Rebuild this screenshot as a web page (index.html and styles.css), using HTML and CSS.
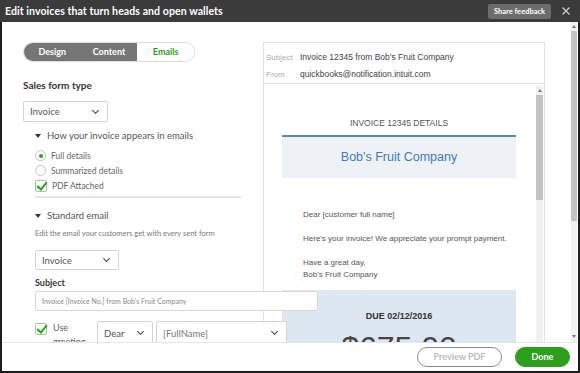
FILE: index.html
```html
<!DOCTYPE html>
<html lang="en">
<head>
    <meta charset="UTF-8">
    <title>Edit invoices</title>
    <link rel="stylesheet" href="styles.css">
</head>
<body>
    <div class="window">
        <header class="topbar">
            <h1 class="title">Edit invoices that turn heads and open wallets</h1>
            <span class="feedback">Share feedback</span>
            <svg class="close" width="8" height="8" viewBox="0 0 8 8">
                <path d="M0.5 0.5 L7.5 7.5 M7.5 0.5 L0.5 7.5" stroke="#d0d0d0" stroke-width="1.2" fill="none"/>
            </svg>
        </header>

        <div class="frame">
            <div class="main">
                <div class="content">
                    <div class="settings">
                        <div class="tabs">
                            <span class="tab dark">Design</span>
                            <span class="tab dark">Content</span>
                            <span class="tab active">Emails</span>
                        </div>

                        <div class="label form-type">Sales form type</div>
                        <div class="select sales-select">Invoice <span class="chev"></span></div>

                        <div class="section">
                            <div class="toggle appears"><span class="caret"></span>How your invoice appears in emails</div>
                            <div class="options">
                                <div class="option"><span class="radio checked"></span>Full details</div>
                                <div class="option"><span class="radio"></span>Summarized details</div>
                                <div class="option"><span class="check"></span>PDF Attached</div>
                            </div>
                            <div class="divider"></div>

                            <div class="toggle standard"><span class="caret"></span>Standard email</div>
                            <div class="hint">Edit the email your customers get with every sent form</div>
                            <div class="select email-select">Invoice <span class="chev"></span></div>

                            <div class="label subject-label">Subject</div>
                            <div class="input">Invoice [Invoice No.] from Bob's Fruit Company</div>

                            <div class="greeting">
                                <span class="check"></span>
                                <span class="greeting-txt">Use<br>greeting</span>
                                <div class="select dear">Dear <span class="chev"></span></div>
                                <div class="select fullname">[FullName] <span class="chev"></span></div>
                            </div>
                        </div>
                    </div>

                    <div class="preview">
                        <div class="mail-head">
                            <div class="head-row"><span class="head-key">Subject</span>Invoice 12345 from Bob's Fruit Company</div>
                            <div class="head-row"><span class="head-key">From</span>quickbooks@notification.intuit.com</div>
                        </div>
                        <div class="mail-body">
                            <div class="mail">
                                <div class="mail-title">INVOICE 12345 DETAILS</div>
                                <div class="company">Bob's Fruit Company</div>
                                <div class="letter">
                                    <p>Dear [customer full name]</p>
                                    <p>Here's your invoice! We appreciate your prompt payment.</p>
                                    <p>Have a great day,<br>Bob's Fruit Company</p>
                                </div>
                                <div class="due">
                                    <div class="due-date">DUE 02/12/2016</div>
                                    <div class="amount">$675.00</div>
                                </div>
                            </div>
                            <div class="scroll inner">
                                <span class="arrow up"></span>
                                <div class="thumb"></div>
                            </div>
                        </div>
                    </div>
                </div>

                <div class="scroll outer">
                    <span class="arrow up"></span>
                    <div class="thumb"></div>
                    <div class="track"></div>
                    <span class="arrow down"></span>
                </div>
            </div>

            <footer class="actions">
                <span class="btn outline">Preview PDF</span>
                <span class="btn done">Done</span>
            </footer>
        </div>
    </div>
</body>
</html>
```

FILE: styles.css
```css
* {
    box-sizing: border-box;
}

body {
    margin: 0;
    font-family: Lato, "Open Sans", sans-serif;
    color: #444;
}

.window {
    width: 580px;
    height: 373px;
    background-color: #fff;
    overflow: hidden;
}

/* top bar */
.topbar {
    display: flex;
    align-items: center;
    height: 22px;
    background-color: #3b3b3b;
    padding: 0 10px 0 5px;
}

.title {
    flex: 1;
    margin: 0;
    font-size: 10.6px;
    font-weight: bold;
    color: #fff;
    letter-spacing: 0.05px;
}

.feedback {
    display: block;
    width: 63px;
    height: 15px;
    line-height: 15px;
    text-align: center;
    background-color: #6c6c6c;
    border-radius: 2px;
    color: #fff;
    font-size: 7.5px;
    font-weight: bold;
    margin-right: 11px;
}

.close {
    display: block;
}

.frame {
    height: 351px;
    border: 2px solid #1d1d1d;
    border-top: none;
}

.main {
    display: flex;
    height: 320px;
    overflow: hidden;
}

.content {
    flex: 1;
    display: flex;
    align-items: flex-start;
    padding: 20px 0 0 21px;
}

/* left settings column */
.settings {
    position: relative;
    z-index: 1;
    width: 240px;
    flex: none;
}

.tabs {
    display: flex;
    width: 172px;
    height: 20px;
    border: 1px solid #ddd;
    border-radius: 10px;
    overflow: hidden;
}

.tab {
    flex: 1;
    line-height: 18px;
    text-align: center;
    font-size: 9px;
    font-weight: bold;
}

.tab.dark {
    background-color: #767676;
    color: #fff;
}

.tab.active {
    color: #2ca01c;
    background-color: #fff;
}

.label {
    font-size: 10px;
    font-weight: bold;
    color: #333;
    line-height: 14px;
}

.form-type {
    margin-top: 16px;
}

.select {
    display: flex;
    align-items: center;
    flex: none;
    height: 21px;
    border: 1px solid #d4d4d4;
    border-radius: 2px;
    padding: 0 6px;
    font-size: 9.5px;
    color: #555;
    background-color: #fff;
}

.chev {
    margin-left: auto;
    width: 5px;
    height: 5px;
    border-right: 1.5px solid #444;
    border-bottom: 1.5px solid #444;
    transform: rotate(45deg);
    margin-top: -3px;
    margin-right: 3px;
}

.sales-select {
    width: 85px;
    margin-top: 9px;
}

.section {
    padding-left: 12px;
}

.toggle {
    display: flex;
    align-items: center;
    font-size: 9.5px;
    color: #555;
    line-height: 14px;
}

.caret {
    width: 0;
    height: 0;
    border-left: 3px solid transparent;
    border-right: 3px solid transparent;
    border-top: 4px solid #333;
    margin-right: 6px;
}

.appears {
    margin-top: 7px;
}

.options {
    margin-top: 5px;
}

.option {
    display: flex;
    align-items: center;
    height: 15px;
    font-size: 8.5px;
    color: #666;
}

.radio {
    width: 11px;
    height: 11px;
    border: 1px solid #c4c4c4;
    border-radius: 50%;
    margin-right: 5px;
    position: relative;
}

.radio.checked::after {
    content: "";
    position: absolute;
    left: 2.5px;
    top: 2.5px;
    width: 4px;
    height: 4px;
    border-radius: 50%;
    background-color: #2ca01c;
}

.check {
    flex: none;
    position: relative;
    width: 12px;
    height: 12px;
    border: 1px solid #9ccc92;
    border-radius: 2px;
    margin-right: 5px;
    background-color: #fff;
}

.check::after {
    content: "";
    position: absolute;
    left: 3px;
    top: -1px;
    width: 4px;
    height: 8px;
    border-right: 2px solid #2ca01c;
    border-bottom: 2px solid #2ca01c;
    transform: rotate(40deg);
}

.divider {
    width: 206px;
    height: 2px;
    background-color: #e6e6e6;
    margin-top: 3px;
}

.standard {
    margin-top: 11px;
}

.hint {
    margin-top: 5px;
    font-size: 7.5px;
    line-height: 12px;
    color: #777;
}

.email-select {
    width: 84px;
    height: 20px;
    margin-top: 10px;
}

.subject-label {
    margin-top: 7px;
    font-size: 9px;
    line-height: 12px;
}

.input {
    width: 283px;
    height: 20px;
    margin-top: 2px;
    border: 1px solid #d8d8d8;
    border-radius: 2px;
    background-color: #fff;
    padding-left: 6px;
    font-size: 7px;
    line-height: 18px;
    color: #888;
}

.greeting {
    display: flex;
    align-items: flex-start;
    margin-top: 10px;
}

.greeting .check {
    margin-top: 2px;
}

.greeting-txt {
    flex: none;
    width: 44px;
    font-size: 9px;
    line-height: 14px;
    color: #666;
    margin-left: 1px;
}

.dear {
    width: 56px;
    height: 24px;
}

.fullname {
    width: 131px;
    height: 24px;
    margin-left: 3px;
    color: #777;
}

/* email preview */
.preview {
    width: 282px;
    height: 300px;
    flex: none;
    display: flex;
    flex-direction: column;
    border: 1px solid #e4e4e4;
    border-bottom: none;
    font-family: "Liberation Sans", Arial, sans-serif;
}

.mail-head {
    height: 43px;
    padding: 6px 0 0 2px;
    border-bottom: 1px solid #e4e4e4;
}

.head-row {
    font-size: 8.5px;
    line-height: 16px;
    color: #444;
}

.head-key {
    display: inline-block;
    width: 34px;
    color: #aaa;
    font-size: 8px;
}

.mail-body {
    flex: 1;
    display: flex;
}

.mail {
    flex: 1;
    padding: 32px 20px 0 18px;
}

.mail-title {
    text-align: center;
    font-size: 8.5px;
    line-height: 14px;
    color: #555;
}

.company {
    margin-top: 5px;
    height: 43px;
    line-height: 41px;
    border-top: 2px solid #5688b8;
    background-color: #eef2f6;
    text-align: center;
    font-size: 12.5px;
    color: #3f7cb8;
}

.letter {
    padding: 31px 0 0 21px;
    font-size: 8px;
    line-height: 12px;
    color: #555;
    white-space: nowrap;
}

.letter p {
    margin: 0 0 12px;
}

.letter p:last-child {
    margin: 0;
}

.due {
    margin-top: 9px;
    height: 70px;
    background-color: #dde7ef;
    padding-top: 19px;
    text-align: center;
}

.due-date {
    font-size: 9px;
    line-height: 14px;
    font-weight: bold;
    color: #333;
}

.amount {
    margin-top: 7px;
    font-size: 32px;
    line-height: 36px;
    color: #444;
}

/* scrollbars */
.scroll {
    display: flex;
    flex-direction: column;
    align-items: center;
    background-color: #f1f1f1;
}

.scroll .thumb {
    width: 100%;
    background-color: #c3c3c3;
}

.arrow {
    width: 0;
    height: 0;
    border-left: 2px solid transparent;
    border-right: 2px solid transparent;
}

.arrow.up {
    border-bottom: 3px solid #777;
    margin: 3px 0 3px;
}

.arrow.down {
    border-top: 3px solid #777;
    margin: 0 0 4px;
}

.scroll.outer {
    width: 6px;
    margin-right: 1px;
    flex: none;
}

.outer .thumb {
    height: 190px;
}

.outer .track {
    flex: 1;
}

.scroll.inner {
    width: 7px;
    margin-right: 1px;
    margin-top: 2px;
}

.inner .thumb {
    height: 105px;
}

/* bottom actions */
.actions {
    display: flex;
    justify-content: flex-end;
    align-items: center;
    gap: 13px;
    height: 29px;
    border-top: 1px solid #e6e6e6;
    padding: 0 8px 1px 0;
}

.btn {
    display: block;
    height: 20px;
    line-height: 18px;
    border-radius: 10px;
    text-align: center;
    font-size: 9px;
    font-weight: bold;
}

.btn.outline {
    width: 85px;
    border: 1px solid #8a8a8a;
    color: #bdbdbd;
}

.btn.done {
    width: 55px;
    background-color: #2ca01c;
    border: 1px solid #2ca01c;
    color: #fff;
}
```
